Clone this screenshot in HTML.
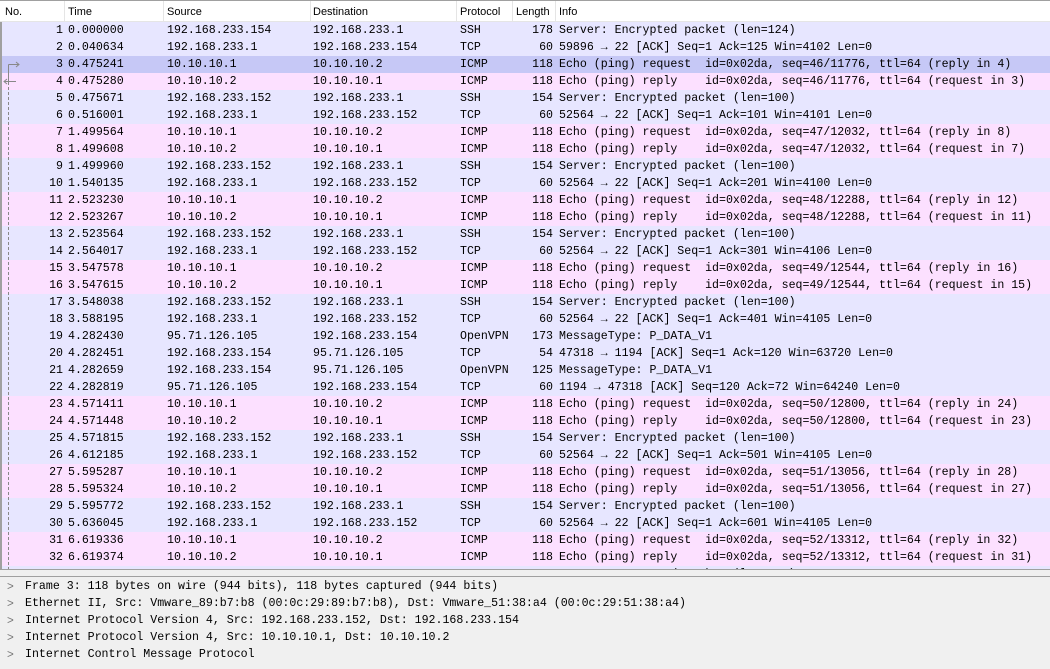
<!DOCTYPE html>
<html><head><meta charset="utf-8"><style>
*{margin:0;padding:0;box-sizing:border-box}
body{width:1050px;height:669px;overflow:hidden;background:#fff;position:relative;font-family:"Liberation Mono",monospace;font-size:11.6px;color:#000}
.hdr{position:absolute;left:0;top:0;width:1050px;height:22px;background:#fff;border-bottom:1px solid #e5e5e5;border-top:1px solid #a0a0a0;font-family:"Liberation Sans",sans-serif;font-size:11px}
.hdr span{position:absolute;top:5px}
.hdr i{position:absolute;top:0;width:1px;height:21px;background:#e5e5e5}
.list{position:absolute;left:0;top:22px;width:1050px;height:547px;overflow:hidden;border-left:2px solid #a0a0a0}
.r{position:absolute;left:0;width:1050px;height:17px;white-space:pre;line-height:17px}
.r span{position:absolute;top:0}
.a{background:#e7e6ff}.p{background:#fce0ff}.s{background:#c6c8f6}
.det{position:absolute;left:0;top:576px;width:1050px;height:93px;background:#f0f0f0;border-top:1px solid #a0a0a0}
.sep{position:absolute;left:0;top:569px;width:1050px;height:7px;background:#f0f0f0;border-top:1px solid #a0a0a0}
.d{position:absolute;left:20px;height:17px;line-height:17px;white-space:pre;width:1030px}
.d b{position:absolute;left:-13px;font-weight:normal;color:#777;font-family:"Liberation Sans",sans-serif}
.d span{position:absolute;left:5px}
</style></head><body>
<div class="hdr">
<span style="left:5px">No.</span><i style="left:64px"></i>
<span style="left:68px">Time</span><i style="left:163px"></i>
<span style="left:167px">Source</span><i style="left:310px"></i>
<span style="left:313px">Destination</span><i style="left:456px"></i>
<span style="left:460px">Protocol</span><i style="left:512px"></i>
<span style="left:516px">Length</span><i style="left:555px"></i>
<span style="left:559px">Info</span>
</div>
<div class="list" id="L"></div>
<div class="sep"></div>
<div class="det">
<div class="d" style="top:1px"><b>&gt;</b><span>Frame 3: 118 bytes on wire (944 bits), 118 bytes captured (944 bits)</span></div>
<div class="d" style="top:18px"><b>&gt;</b><span>Ethernet II, Src: Vmware_89:b7:b8 (00:0c:29:89:b7:b8), Dst: Vmware_51:38:a4 (00:0c:29:51:38:a4)</span></div>
<div class="d" style="top:35px"><b>&gt;</b><span>Internet Protocol Version 4, Src: 192.168.233.152, Dst: 192.168.233.154</span></div>
<div class="d" style="top:52px"><b>&gt;</b><span>Internet Protocol Version 4, Src: 10.10.10.1, Dst: 10.10.10.2</span></div>
<div class="d" style="top:69px"><b>&gt;</b><span>Internet Control Message Protocol</span></div>
</div>
<script>
var rows=[
["1","0.000000","192.168.233.154","192.168.233.1","SSH","178","Server: Encrypted packet (len=124)","a"],
["2","0.040634","192.168.233.1","192.168.233.154","TCP","60","59896 → 22 [ACK] Seq=1 Ack=125 Win=4102 Len=0","a"],
["3","0.475241","10.10.10.1","10.10.10.2","ICMP","118","Echo (ping) request  id=0x02da, seq=46/11776, ttl=64 (reply in 4)","s"],
["4","0.475280","10.10.10.2","10.10.10.1","ICMP","118","Echo (ping) reply    id=0x02da, seq=46/11776, ttl=64 (request in 3)","p"],
["5","0.475671","192.168.233.152","192.168.233.1","SSH","154","Server: Encrypted packet (len=100)","a"],
["6","0.516001","192.168.233.1","192.168.233.152","TCP","60","52564 → 22 [ACK] Seq=1 Ack=101 Win=4101 Len=0","a"],
["7","1.499564","10.10.10.1","10.10.10.2","ICMP","118","Echo (ping) request  id=0x02da, seq=47/12032, ttl=64 (reply in 8)","p"],
["8","1.499608","10.10.10.2","10.10.10.1","ICMP","118","Echo (ping) reply    id=0x02da, seq=47/12032, ttl=64 (request in 7)","p"],
["9","1.499960","192.168.233.152","192.168.233.1","SSH","154","Server: Encrypted packet (len=100)","a"],
["10","1.540135","192.168.233.1","192.168.233.152","TCP","60","52564 → 22 [ACK] Seq=1 Ack=201 Win=4100 Len=0","a"],
["11","2.523230","10.10.10.1","10.10.10.2","ICMP","118","Echo (ping) request  id=0x02da, seq=48/12288, ttl=64 (reply in 12)","p"],
["12","2.523267","10.10.10.2","10.10.10.1","ICMP","118","Echo (ping) reply    id=0x02da, seq=48/12288, ttl=64 (request in 11)","p"],
["13","2.523564","192.168.233.152","192.168.233.1","SSH","154","Server: Encrypted packet (len=100)","a"],
["14","2.564017","192.168.233.1","192.168.233.152","TCP","60","52564 → 22 [ACK] Seq=1 Ack=301 Win=4106 Len=0","a"],
["15","3.547578","10.10.10.1","10.10.10.2","ICMP","118","Echo (ping) request  id=0x02da, seq=49/12544, ttl=64 (reply in 16)","p"],
["16","3.547615","10.10.10.2","10.10.10.1","ICMP","118","Echo (ping) reply    id=0x02da, seq=49/12544, ttl=64 (request in 15)","p"],
["17","3.548038","192.168.233.152","192.168.233.1","SSH","154","Server: Encrypted packet (len=100)","a"],
["18","3.588195","192.168.233.1","192.168.233.152","TCP","60","52564 → 22 [ACK] Seq=1 Ack=401 Win=4105 Len=0","a"],
["19","4.282430","95.71.126.105","192.168.233.154","OpenVPN","173","MessageType: P_DATA_V1","a"],
["20","4.282451","192.168.233.154","95.71.126.105","TCP","54","47318 → 1194 [ACK] Seq=1 Ack=120 Win=63720 Len=0","a"],
["21","4.282659","192.168.233.154","95.71.126.105","OpenVPN","125","MessageType: P_DATA_V1","a"],
["22","4.282819","95.71.126.105","192.168.233.154","TCP","60","1194 → 47318 [ACK] Seq=120 Ack=72 Win=64240 Len=0","a"],
["23","4.571411","10.10.10.1","10.10.10.2","ICMP","118","Echo (ping) request  id=0x02da, seq=50/12800, ttl=64 (reply in 24)","p"],
["24","4.571448","10.10.10.2","10.10.10.1","ICMP","118","Echo (ping) reply    id=0x02da, seq=50/12800, ttl=64 (request in 23)","p"],
["25","4.571815","192.168.233.152","192.168.233.1","SSH","154","Server: Encrypted packet (len=100)","a"],
["26","4.612185","192.168.233.1","192.168.233.152","TCP","60","52564 → 22 [ACK] Seq=1 Ack=501 Win=4105 Len=0","a"],
["27","5.595287","10.10.10.1","10.10.10.2","ICMP","118","Echo (ping) request  id=0x02da, seq=51/13056, ttl=64 (reply in 28)","p"],
["28","5.595324","10.10.10.2","10.10.10.1","ICMP","118","Echo (ping) reply    id=0x02da, seq=51/13056, ttl=64 (request in 27)","p"],
["29","5.595772","192.168.233.152","192.168.233.1","SSH","154","Server: Encrypted packet (len=100)","a"],
["30","5.636045","192.168.233.1","192.168.233.152","TCP","60","52564 → 22 [ACK] Seq=1 Ack=601 Win=4105 Len=0","a"],
["31","6.619336","10.10.10.1","10.10.10.2","ICMP","118","Echo (ping) request  id=0x02da, seq=52/13312, ttl=64 (reply in 32)","p"],
["32","6.619374","10.10.10.2","10.10.10.1","ICMP","118","Echo (ping) reply    id=0x02da, seq=52/13312, ttl=64 (request in 31)","p"],
["33","6.619900","192.168.233.152","192.168.233.1","SSH","154","Server: Encrypted packet (len=100)","a"]
];
var h="";
rows.forEach(function(r,i){
h+='<div class="r '+r[7]+'" style="top:'+(i*17)+'px"><span style="left:0;width:61px;text-align:right">'+r[0]+'</span><span style="left:66px">'+r[1]+'</span><span style="left:165px">'+r[2]+'</span><span style="left:311px">'+r[3]+'</span><span style="left:458px">'+r[4]+'</span><span style="left:505px;width:46px;text-align:right">'+r[5]+'</span><span style="left:557px">'+r[6]+'</span></div>';
});
h+='<svg style="position:absolute;left:0;top:34px" width="24" height="520"><g stroke="#888" fill="none" stroke-width="1"><path d="M6.5 8.5H17M14 6l3 2.5-3 2.5"/><path d="M6.5 8.5V25"/><path d="M2 25.5H14M5 23l-3 2.5 3 2.5"/><path d="M6.5 26V520" stroke-dasharray="3,2"/></g></svg>';
document.getElementById("L").innerHTML=h;
</script>
</body></html>
